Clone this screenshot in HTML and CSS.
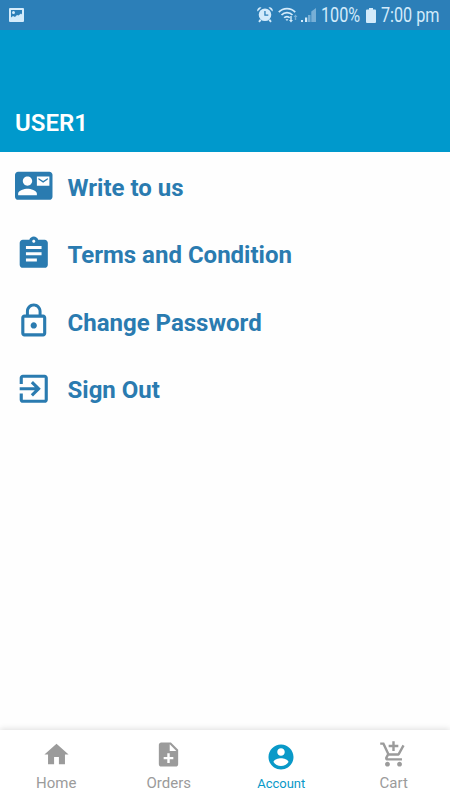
FILE: index.html
```
<!DOCTYPE html>
<html lang="en">
<head>
    <meta charset="UTF-8">
    <meta name="viewport" content="width=device-width, initial-scale=1.0">
    <title>Account</title>
    <link rel="stylesheet" href="styles.css">
</head>
<body>
    <div class="app">
        <div class="status-bar">
            <svg class="status-picture" viewBox="0 0 15 14"><path fill-rule="evenodd" d="M1 0h13a1 1 0 0 1 1 1v12a1 1 0 0 1-1 1H1a1 1 0 0 1-1-1V1a1 1 0 0 1 1-1zM2 2v7.500l2-1.500 2 1 2-2 1.500.5L12 5.500l1 1V2zM4.500 3a1.500 1.500 0 1 1 0 3 1.500 1.500 0 0 1 0-3z"/></svg>
            <div class="status-right">
                <svg class="status-alarm" viewBox="0 0 16 16"><path fill-rule="evenodd" d="M8 1.500a6.300 6.300 0 1 1 0 12.600A6.300 6.300 0 0 1 8 1.500zM7.300 4v4.700h4V7.400H8.600V4z"/><path d="M.5 4.500A3 3 0 0 1 4.500.6zM15.500 4.500A3 3 0 0 0 11.500.6zM3 12l1.500 1.500L2.500 15.500 1.300 14.300zM13 12l-1.500 1.500 2 2 1.200-1.200z"/></svg>
                <svg class="status-wifi" viewBox="0 0 20 16"><path class="line" d="M.8 5.200C5.200.500 12.800.500 17.200 5.200M3.500 8c3-3.300 8-3.300 11 0M6.200 10.800c1.500-1.700 4-1.700 5.500 0"/><path d="M7.400 12.200h3.100L9 14zM12.300 9h1.400v4h1.300l-2 2.500-2-2.500h1.300z"/><path class="dim" d="M16.800 13h1.400v-3h1.300l-2-2.500-2 2.500h1.300z"/></svg>
                <svg class="status-signal" viewBox="0 0 15 14"><path d="M0 12h2v2H0zM4 9.500h2.200V14H4z"/><path class="dim" d="M7 7h2.500v7H7zM10.300 3.500L15 0v14h-4.700z"/></svg>
                <span class="status-text percent">100%</span>
                <svg class="status-battery" viewBox="0 0 10 15"><path d="M3 0h4v1.500h2a1 1 0 0 1 1 1V14a1 1 0 0 1-1 1H1a1 1 0 0 1-1-1V2.500a1 1 0 0 1 1-1h2z"/></svg>
                <span class="status-text time">7:00 pm</span>
            </div>
        </div>

        <div class="header">
            <div class="user-name">USER1</div>
        </div>

        <div class="menu">
            <div class="menu-item">
                <svg class="menu-icon" viewBox="0 0 24 24"><path d="M21 8V7l-3 2-3-2v1l3 2 3-2zm1-5H2C.9 3 0 3.900 0 5v14c0 1.100.9 2 2 2h20c1.100 0 1.990-.9 1.990-2L24 5c0-1.100-.9-2-2-2zM8 6c1.660 0 3 1.340 3 3s-1.340 3-3 3-3-1.340-3-3 1.340-3 3-3zm6 12H2v-1c0-2 4-3.100 6-3.100s6 1.100 6 3.100v1zm8-6h-8V6h8v6z"/></svg>
                <span class="menu-label">Write to us</span>
            </div>
            <div class="menu-item">
                <svg class="menu-icon" viewBox="0 0 24 24"><path d="M19 3h-4.180C14.400 1.840 13.300 1 12 1c-1.300 0-2.400.84-2.820 2H5c-1.100 0-2 .9-2 2v14c0 1.100.9 2 2 2h14c1.100 0 2-.9 2-2V5c0-1.100-.9-2-2-2zm-7 0c.55 0 1 .45 1 1s-.45 1-1 1-1-.45-1-1 .45-1 1-1zm2 14H7v-2h7v2zm3-4H7v-2h10v2zm0-4H7V7h10v2z"/></svg>
                <span class="menu-label">Terms and Condition</span>
            </div>
            <div class="menu-item">
                <svg class="menu-icon" viewBox="0 0 24 24"><path d="M12 17c1.100 0 2-.9 2-2s-.9-2-2-2-2 .9-2 2 .9 2 2 2zm6-9h-1V6c0-2.760-2.240-5-5-5S7 3.240 7 6v2H6c-1.100 0-2 .9-2 2v10c0 1.100.9 2 2 2h12c1.100 0 2-.9 2-2V10c0-1.100-.9-2-2-2zM8.900 6c0-1.710 1.390-3.100 3.100-3.100s3.100 1.390 3.100 3.100v2H8.900V6zM18 20H6V10h12v10z"/></svg>
                <span class="menu-label">Change Password</span>
            </div>
            <div class="menu-item">
                <svg class="menu-icon" viewBox="0 0 24 24"><path d="M10.090 15.590L11.500 17l5-5-5-5-1.410 1.410L12.670 11H3v2h9.670l-2.580 2.590zM19 3H5c-1.110 0-2 .9-2 2v4h2V5h14v14H5v-4H3v4c0 1.100.89 2 2 2h14c1.100 0 2-.9 2-2V5c0-1.100-.9-2-2-2z"/></svg>
                <span class="menu-label">Sign Out</span>
            </div>
        </div>

        <div class="tab-bar">
            <div class="tab">
                <svg class="tab-icon" viewBox="0 0 24 24"><path d="M10 20v-6h4v6h5v-8h3L12 3 2 12h3v8z"/></svg>
                <span class="tab-label">Home</span>
            </div>
            <div class="tab">
                <svg class="tab-icon" viewBox="0 0 24 24"><path d="M14 2H6c-1.100 0-1.990.9-1.990 2L4 20c0 1.100.89 2 1.990 2H18c1.100 0 2-.9 2-2V8l-6-6zm2 14h-3v3h-2v-3H8v-2h3v-3h2v3h3v2zm-3-7V3.500L18.500 9H13z"/></svg>
                <span class="tab-label">Orders</span>
            </div>
            <div class="tab active">
                <svg class="tab-icon" viewBox="0 0 24 24"><path d="M12 2C6.480 2 2 6.480 2 12s4.480 10 10 10 10-4.480 10-10S17.520 2 12 2zm0 3c1.660 0 3 1.340 3 3s-1.340 3-3 3-3-1.340-3-3 1.340-3 3-3zm0 14.200c-2.500 0-4.710-1.280-6-3.220.03-1.990 4-3.080 6-3.080 1.990 0 5.970 1.090 6 3.080-1.290 1.940-3.500 3.220-6 3.220z"/></svg>
                <span class="tab-label">Account</span>
            </div>
            <div class="tab">
                <svg class="tab-icon" viewBox="0 0 24 24"><path d="M11 9h2V6h3V4h-3V1h-2v3H8v2h3v3zm-4 9c-1.100 0-1.990.9-1.990 2S5.900 22 7 22s2-.9 2-2-.9-2-2-2zm10 0c-1.100 0-1.990.9-1.990 2s.89 2 1.990 2 2-.9 2-2-.9-2-2-2zm-9.830-3.250l.03-.12.900-1.630h7.450c.75 0 1.410-.41 1.750-1.030l3.860-7.010L19.420 4h-.01l-1.100 2-2.760 5H8.530l-.13-.27L6.160 6l-.95-2-.94-2H1v2h2l3.600 7.590-1.350 2.450c-.16.28-.25.61-.25.96 0 1.100.9 2 2 2h12v-2H7.420c-.13 0-.25-.11-.25-.25z"/></svg>
                <span class="tab-label">Cart</span>
            </div>
        </div>
    </div>
</body>
</html>
```
FILE: styles.css
```
* {
    box-sizing: border-box;
}
body {
    margin: 0;
    font-family: Roboto, "Liberation Sans", sans-serif;
    background-color: #fefefe;
}
svg {
    display: block;
    flex: none;
    fill: currentColor;
}
.app {
    display: flex;
    flex-direction: column;
    height: 800px;
    overflow: hidden;
}

/* Status bar */
.status-bar {
    display: flex;
    align-items: center;
    justify-content: space-between;
    height: 30px;
    padding: 0 10px 0 9px;
    background-color: #2c7fb8;
    color: #d3ebfb;
}
.status-right {
    display: flex;
    align-items: center;
    height: 30px;
}
.status-picture {
    width: 15px;
    height: 14px;
}
.status-alarm {
    width: 16px;
    height: 16px;
    margin-right: 5px;
}
.status-wifi {
    width: 20px;
    height: 16px;
    margin-right: 3px;
}
.status-signal {
    width: 15px;
    height: 14px;
    margin-right: 5px;
}
.status-battery {
    width: 10px;
    height: 15px;
    margin: 0 5px;
}
.line {
    fill: none;
    stroke: currentColor;
    stroke-width: 1.7;
}
.dim {
    opacity: 0.45;
}
/* condensed digits */
.status-text {
    font-size: 19.5px;
    line-height: 28px;
    white-space: nowrap;
    padding-top: 2px;
    transform: scaleX(0.83);
    transform-origin: left center;
}
.percent {
    width: 40px;
}
.time {
    width: 59px;
}

/* Header */
.header {
    display: flex;
    align-items: flex-end;
    height: 122px;
    padding: 0 15px 14px;
    background-color: #0099cc;
}
.user-name {
    color: #fff;
    font-size: 24px;
    font-weight: 600;
    line-height: 30px;
}

/* Menu */
.menu {
    flex: 1;
}
.menu-item {
    display: flex;
    align-items: center;
    gap: 15px;
    height: 67.5px;
    padding: 0 15px;
    color: #2a7bb0;
}
.menu-icon {
    width: 37.5px;
    height: 37.5px;
}
.menu-label {
    font-size: 24px;
    font-weight: 700;
    line-height: 30px;
    padding-top: 4px;
}

/* Bottom tabs */
.tab-bar {
    display: flex;
    height: 70px;
    background-color: #fff;
    box-shadow: 0 -1px 6px rgba(0, 0, 0, 0.13);
}
.tab {
    display: flex;
    flex: 1;
    flex-direction: column;
    align-items: center;
    padding-top: 10px;
    color: #9b9b9b;
}
.tab-icon {
    width: 29px;
    height: 29px;
}
.tab-label {
    margin-top: 4px;
    font-size: 15px;
    line-height: 20px;
}
.tab.active {
    padding-top: 12px;
    color: #0999c8;
}
.active .tab-icon {
    width: 30px;
    height: 30px;
}
.active .tab-label {
    margin-top: 2px;
    font-size: 13px;
}
```
